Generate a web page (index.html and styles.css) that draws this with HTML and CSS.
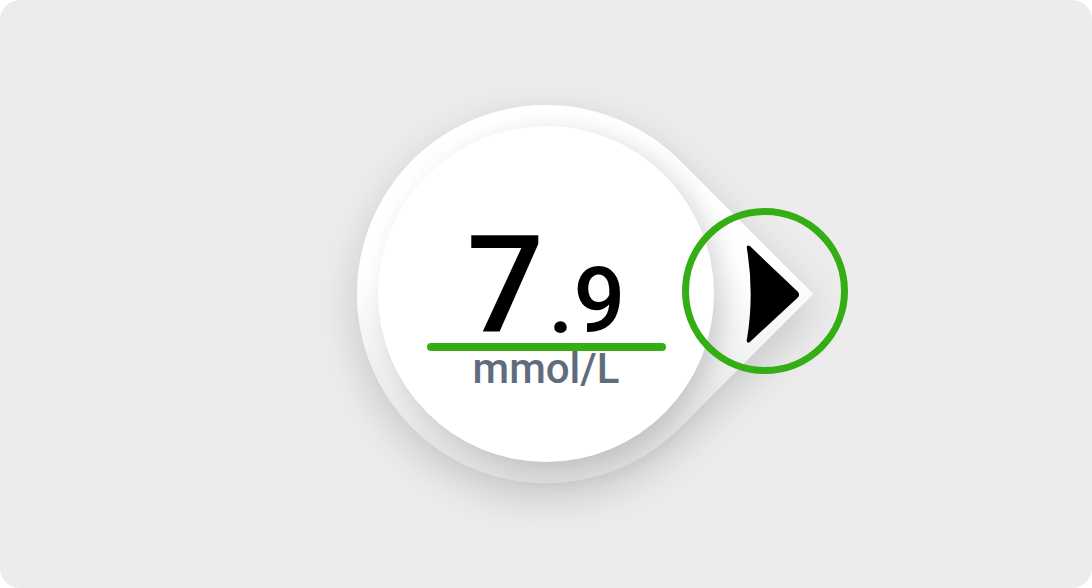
FILE: index.html
```html
<!DOCTYPE html>
<html lang="en">
<head>
<meta charset="utf-8">
<title>Glucose reading</title>
<link rel="stylesheet" href="styles.css">
</head>
<body>
<main class="card">
  <div class="drop">
    <div class="face">
      <div class="value">
        <span class="int">7</span>
        <span class="dec">.9</span>
      </div>
      <div class="bar"></div>
      <div class="unit">mmol/L</div>
    </div>
  </div>
  <svg class="next" viewBox="0 0 166 166" width="166" height="166" aria-label="Next">
    <circle cx="83" cy="83" r="79.5" fill="none" stroke="#34ae14" stroke-width="7"/>
    <path d="M64.8 40 Q64.6 35.6 68.4 38.6 L115.6 83.6 Q118.6 86.8 115.6 89.8 L68.4 133.4 Q64.6 136.4 64.8 132 Q72.6 86 64.8 40 Z" fill="#000"/>
  </svg>
</main>
</body>
</html>
```

FILE: styles.css
```css
html, body {
  margin: 0;
  padding: 0;
  background: #ffffff;
}

.card {
  position: relative;
  width: 1092px;
  height: 588px;
  background: #ececec;
  border-radius: 20px;
  display: flex;
  align-items: center;
  justify-content: center;
  overflow: hidden;
  font-family: "Roboto", "Liberation Sans", sans-serif;
}

.drop {
  width: 378px;
  height: 378px;
  border-radius: 50% 0 50% 50%;
  transform: rotate(45deg);
  background: linear-gradient(135deg, #ffffff 0%, #ffffff 46%, #dedede 86%);
  box-shadow: 10px 10px 40px rgba(0, 0, 0, 0.16);
  display: flex;
  align-items: center;
  justify-content: center;
}

.face {
  width: 336px;
  height: 336px;
  border-radius: 50%;
  background: #ffffff;
  transform: rotate(-45deg);
  box-shadow: 9px 7px 26px rgba(0, 0, 0, 0.17);
  display: flex;
  flex-direction: column;
  align-items: center;
  box-sizing: border-box;
  padding-top: 110px;
}

.value {
  display: flex;
  align-items: baseline;
  color: #000000;
  font-weight: 500;
}

.int {
  font-size: 136px;
  line-height: 100px;
}

.dec {
  font-size: 91px;
  line-height: 60px;
  margin-left: 4px;
}

.bar {
  width: 239px;
  height: 8px;
  border-radius: 4px;
  background: #34ae14;
  margin-top: 7px;
}

.unit {
  font-size: 42px;
  line-height: 36px;
  font-weight: 500;
  color: #5f6c7c;
}

.next {
  position: absolute;
  left: 682px;
  top: 208px;
}
```
